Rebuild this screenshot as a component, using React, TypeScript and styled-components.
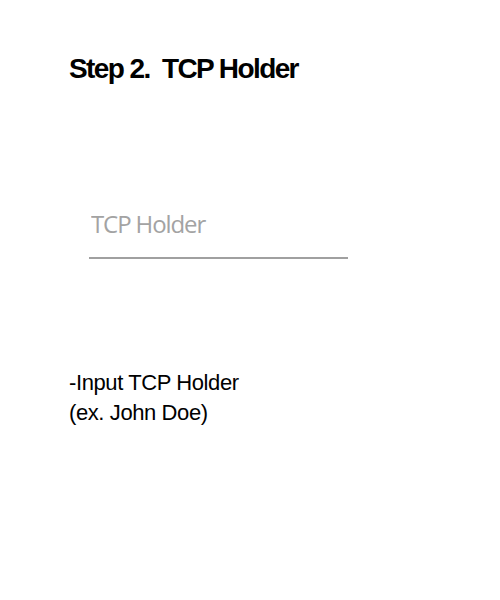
import styled, { createGlobalStyle } from 'styled-components';

const GlobalStyle = createGlobalStyle`
  html, body {
    margin: 0;
    padding: 0;
    background: #ffffff;
  }
`;

const Page = styled.div`
  width: 500px;
  height: 600px;
  display: flex;
  flex-direction: column;
  padding: 53px 0 0 69px;
  box-sizing: border-box;
`;

const Title = styled.h1`
  margin: 0;
  font-family: 'Liberation Sans', Arial, sans-serif;
  font-weight: 700;
  font-size: 28px;
  line-height: 32px;
  color: #000;
  letter-spacing: -1.6px;
  white-space: pre;
`;

const Field = styled.label`
  display: flex;
  flex-direction: column;
  width: 259px;
  margin: 123px 0 0 20px;
`;

const Input = styled.input`
  border: none;
  border-bottom: 2px solid #a0a0a0;
  outline: none;
  padding: 0 0 17px 2px;
  font-family: 'Open Sans', sans-serif;
  font-size: 24px;
  line-height: 32px;
  letter-spacing: -1.1px;
  color: #333;
  background: transparent;
  &::placeholder {
    color: #a3a3a3;
  }
`;

const Hint = styled.p`
  margin: 109px 0 0 0;
  font-family: 'Liberation Sans', Arial, sans-serif;
  font-size: 22px;
  line-height: 30px;
  color: #000;
  letter-spacing: -0.4px;
`;

export default function App() {
  return (
    <>
      <GlobalStyle />
      <Page>
        <Title>{'Step 2.  TCP Holder'}</Title>
        <Field>
          <Input type="text" placeholder="TCP Holder" />
        </Field>
        <Hint>
          -Input TCP Holder
          <br />
          (ex. John Doe)
        </Hint>
      </Page>
    </>
  );
}
